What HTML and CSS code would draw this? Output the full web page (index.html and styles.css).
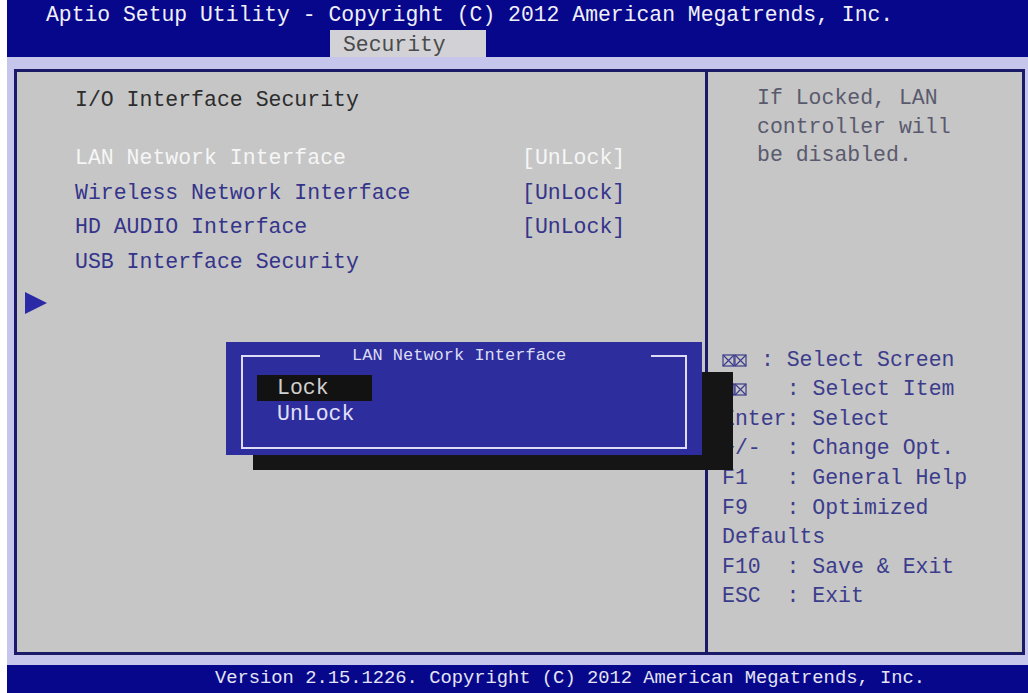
FILE: index.html
```html
<!DOCTYPE html>
<html lang="en">
<head>
    <meta charset="UTF-8">
    <title>Aptio Setup Utility - Security</title>
    <link rel="stylesheet" href="styles.css">
</head>
<body>
    <div class="screen">
        <header class="top-bar">
            <div class="title">Aptio Setup Utility - Copyright (C) 2012 American Megatrends, Inc.</div>
            <div class="tabs"><span class="tab">Security</span></div>
        </header>

        <main class="frame-wrap">
            <div class="frame">
                <section class="menu">
                    <h1 class="menu-title">I/O Interface Security</h1>
                    <div class="items">
                        <div class="item selected"><span>LAN Network Interface</span><span>[UnLock]</span></div>
                        <div class="item"><span>Wireless Network Interface</span><span>[UnLock]</span></div>
                        <div class="item"><span>HD AUDIO Interface</span><span>[UnLock]</span></div>
                        <div class="item"><span>USB Interface Security</span><span></span></div>
                    </div>
                    <div class="pointer"></div>
                </section>

                <aside class="help">
                    <p class="help-text">If Locked, LAN controller will be disabled.</p>
                    <ul class="keys">
                        <li><svg class="arrows" width="26" height="14" viewBox="0 0 26 14"><rect x="1" y="2" width="11" height="11" fill="none" stroke="#3c3c8c" stroke-width="1.2"/><path d="M1 2L12 13M12 2L1 13" stroke="#3c3c8c" stroke-width="1.2"/><rect x="13" y="2" width="11" height="11" fill="none" stroke="#3c3c8c" stroke-width="1.2"/><path d="M13 2L24 13M24 2L13 13" stroke="#3c3c8c" stroke-width="1.2"/></svg> : Select Screen</li>
                        <li><svg class="arrows" width="26" height="14" viewBox="0 0 26 14"><rect x="1" y="2" width="11" height="11" fill="none" stroke="#3c3c8c" stroke-width="1.2"/><path d="M1 2L12 13M12 2L1 13" stroke="#3c3c8c" stroke-width="1.2"/><rect x="13" y="2" width="11" height="11" fill="none" stroke="#3c3c8c" stroke-width="1.2"/><path d="M13 2L24 13M24 2L13 13" stroke="#3c3c8c" stroke-width="1.2"/></svg>   : Select Item</li>
                        <li>Enter: Select</li>
                        <li>+/-  : Change Opt.</li>
                        <li>F1   : General Help</li>
                        <li>F9   : Optimized</li>
                        <li>Defaults</li>
                        <li>F10  : Save &amp; Exit</li>
                        <li>ESC  : Exit</li>
                    </ul>
                </aside>
            </div>
        </main>

        <footer class="bottom-bar">Version 2.15.1226. Copyright (C) 2012 American Megatrends, Inc.</footer>

        <div class="popup-shadow"></div>
        <div class="popup">
            <fieldset class="popup-box">
                <legend>LAN Network Interface</legend>
                <div class="option active">Lock</div>
                <div class="option">UnLock</div>
            </fieldset>
        </div>
    </div>
</body>
</html>
```

FILE: styles.css
```css
* {
    margin: 0;
    padding: 0;
    box-sizing: border-box;
}

body {
    background: #ffffff;
    font-family: 'Liberation Mono', 'DejaVu Sans Mono', monospace;
}

.screen {
    position: relative;
    margin-left: 7px;
    width: 1021px;
    height: 693px;
    display: flex;
    flex-direction: column;
    overflow: hidden;
}

/* header */
.top-bar {
    flex: none;
    height: 57px;
    background: #07078b;
}

.title {
    height: 30px;
    line-height: 30px;
    padding-left: 39px;
    font-size: 21.4px;
    color: #f0f0f8;
    white-space: pre;
}

.tabs {
    height: 27px;
}

.tab {
    display: block;
    margin-left: 323px;
    width: 156px;
    height: 27px;
    line-height: 30px;
    padding-left: 13px;
    background: #d2d2d6;
    color: #4a4a4a;
    font-size: 21.4px;
}

/* main frame */
.frame-wrap {
    flex: none;
    height: 608px;
    padding: 12px 3px 10px 7px;
    background: #c6c6ec;
}

.frame {
    height: 100%;
    display: flex;
    border: 3px solid #1a1a68;
    background: #c6c6c6;
    font-size: 21.5px;
}

.menu {
    flex: none;
    width: 691px;
    padding: 13px 0 0 58px;
    border-right: 3px solid #1a1a68;
}

.menu-title {
    font-size: 21.5px;
    font-weight: normal;
    line-height: 30px;
    color: #2c2c2c;
    margin-bottom: 26px;
}

.item {
    display: grid;
    grid-template-columns: 447px auto;
    line-height: 34.5px;
    color: #34348a;
    white-space: pre;
}

.item.selected {
    color: #f6f6f6;
}

.pointer {
    width: 0;
    height: 0;
    margin: 13px 0 0 -50px;
    border-left: 22px solid #2a2aa6;
    border-top: 11.5px solid transparent;
    border-bottom: 11.5px solid transparent;
}

/* help column */
.help {
    flex: 1;
    min-width: 0;
    display: flex;
    flex-direction: column;
    padding: 12px 0 40px 0;
}

.help-text {
    margin-left: 49px;
    width: 15.5ch;
    line-height: 28.5px;
    color: #5a5a6e;
}

.keys {
    list-style: none;
    margin-top: auto;
    padding-left: 14px;
    line-height: 29.6px;
    color: #3c3c8c;
}

.keys li {
    white-space: pre;
}

.arrows {
    vertical-align: -1px;
}

/* footer */
.bottom-bar {
    flex: none;
    height: 28px;
    line-height: 27px;
    padding-left: 208px;
    background: #07078b;
    color: #e4e4f4;
    font-size: 18.8px;
    white-space: pre;
}

/* popup dialog */
.popup-shadow {
    position: absolute;
    left: 246px;
    top: 372px;
    width: 480px;
    height: 98px;
    background: #151515;
}

.popup {
    position: absolute;
    left: 219px;
    top: 342px;
    width: 476px;
    height: 113px;
    display: flex;
    flex-direction: column;
    background: #2d2d9d;
}

.popup-box {
    flex: 1;
    min-width: 0;
    margin: 4px 15px 6px 15px;
    padding: 0;
    border: 2px solid #dcdcf4;
}

.popup-box legend {
    margin-left: 77px;
    padding: 0 85px 0 32px;
    font-size: 17px;
    line-height: 20px;
    color: #dcdcf4;
}

.option {
    margin-left: 14px;
    width: 115px;
    height: 26px;
    line-height: 26px;
    padding-left: 20px;
    font-size: 21.5px;
    color: #e0e0f8;
}

.option.active {
    margin-top: 9px;
    background: #121212;
    color: #cfcfcf;
}
```
